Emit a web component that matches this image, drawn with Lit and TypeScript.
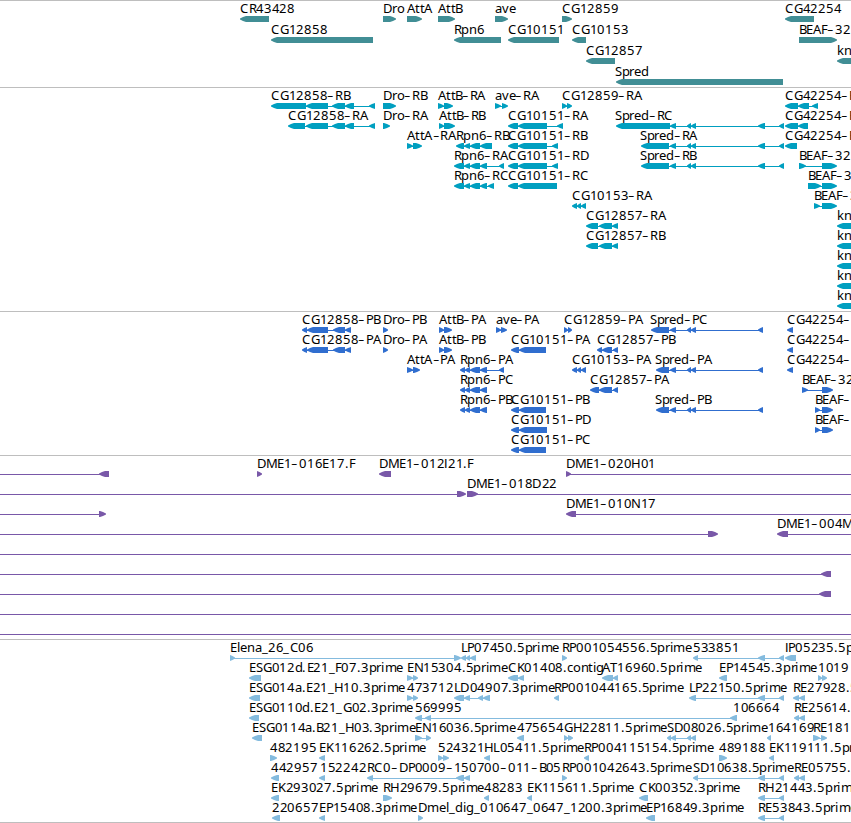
import { LitElement, html, svg, css } from 'lit';
import { customElement, property } from 'lit/decorators.js';

type Strand = '<' | '>';
type Span = [number, number];

// x of the label, label, strand, blocks joined by a thin line
type Feature = [number, string, Strand, Span[]];

interface Track {
  name: string;
  height: number;
  pitch: number;
  rows: Feature[][];
}

const VIEW_WIDTH = 851;
const BLOCK_TOP = 15;
const BLOCK_HEIGHT = 6;
const HEAD = 6;
const FONT_SIZE = 12;

// glyph advances in thousandths of an em
const DIGIT_ADVANCE = 643;
const ADVANCES: Record<string, number> = {
  A: 690, B: 565, C: 720, D: 765, E: 565, F: 540, G: 755, H: 760, I: 291,
  K: 650, L: 540, M: 885, N: 770, O: 790, P: 560, R: 620, S: 565, T: 600,
  a: 575, c: 516, d: 640, e: 580, f: 356, g: 635, i: 295, k: 580, l: 289,
  m: 950, n: 628, o: 613, p: 640, r: 406, t: 373, v: 550,
  '.': 340, _: 520, '-': 665,
};

const SPRED_TAIL: Span[] = [[670, 676], [687, 691], [691, 696], [758, 765], [779, 784]];
const SPRED_CDS_TAIL: Span[] = [[670, 676], [687, 691], [691, 696], [758, 763]];
const OFF_LEFT = -40;
const OFF_RIGHT = 900;

const TRACKS: Track[] = [
  {
    name: 'gene',
    height: 87,
    pitch: 21,
    rows: [
      [
        [240, 'CR43428', '<', [[240, 269]]],
        [383, 'Dro', '>', [[383, 396]]],
        [407, 'AttA', '>', [[407, 422]]],
        [438, 'AttB', '>', [[438, 455]]],
        [495, 'ave', '>', [[495, 508]]],
        [562, 'CG12859', '>', [[562, 572]]],
        [785, 'CG42254', '<', [[785, 814]]],
      ],
      [
        [271, 'CG12858', '<', [[271, 373]]],
        [454, 'Rpn6', '<', [[454, 501]]],
        [508, 'CG10151', '<', [[508, 559]]],
        [572, 'CG10153', '<', [[572, 586]]],
        [799, 'BEAF-32', '>', [[799, 837]]],
      ],
      [
        [586, 'CG12857', '<', [[586, 615]]],
        [837, 'kn', '<', [[837, 870]]],
      ],
      [[615, 'Spred', '<', [[616, 783]]]],
    ],
  },
  {
    name: 'transcript',
    height: 224,
    pitch: 20,
    rows: [
      [
        [271, 'CG12858-RB', '<', [[271, 306], [306, 328], [332, 345], [345, 354], [369, 375]]],
        [383, 'Dro-RB', '>', [[383, 396]]],
        [438, 'AttB-RA', '>', [[438, 444], [444, 453]]],
        [495, 'ave-RA', '>', [[495, 501], [502, 508]]],
        [562, 'CG12859-RA', '>', [[562, 567], [567, 572]]],
        [785, 'CG42254-RB', '<', [[785, 798], [798, 809], [812, 818]]],
      ],
      [
        [288, 'CG12858-RA', '<', [[288, 305], [306, 328], [332, 345], [345, 354], [369, 375]]],
        [383, 'Dro-RA', '>', [[383, 390]]],
        [439, 'AttB-RB', '>', [[439, 444], [444, 455]]],
        [508, 'CG10151-RA', '<', [[508, 518], [518, 547], [557, 563]]],
        [615, 'Spred-RC', '<', [[616, 670], ...SPRED_TAIL]],
        [785, 'CG42254-RC', '<', [[785, 798], [798, 808]]],
      ],
      [
        [407, 'AttA-RA', '>', [[407, 413], [413, 422]]],
        [456, 'Rpn6-RB', '<', [[456, 464], [464, 470], [470, 480], [480, 492]]],
        [508, 'CG10151-RB', '<', [[508, 518], [518, 547], [552, 558]]],
        [640, 'Spred-RA', '<', [[641, 669], ...SPRED_TAIL]],
        [785, 'CG42254-RA', '<', [[785, 797]]],
      ],
      [
        [454, 'Rpn6-RA', '<', [[454, 464], [464, 470], [470, 480], [480, 487], [499, 504]]],
        [508, 'CG10151-RD', '<', [[508, 518], [518, 547], [552, 558]]],
        [640, 'Spred-RB', '<', [[641, 669], ...SPRED_TAIL]],
        [799, 'BEAF-32-RA', '>', [[799, 806], [822, 837]]],
      ],
      [
        [454, 'Rpn6-RC', '<', [[454, 464], [464, 470], [470, 480], [480, 487], [488, 494]]],
        [508, 'CG10151-RC', '<', [[508, 518], [518, 557]]],
        [808, 'BEAF-32-RB', '>', [[808, 821], [822, 837]]],
      ],
      [
        [572, 'CG10153-RA', '<', [[572, 577], [577, 581], [581, 586]]],
        [814, 'BEAF-32-RC', '>', [[814, 820], [822, 837]]],
      ],
      [
        [586, 'CG12857-RA', '<', [[586, 598], [599, 612], [612, 618]]],
        [837, 'kn-RA', '<', [[837, 870]]],
      ],
      [
        [586, 'CG12857-RB', '<', [[586, 598], [599, 612], [612, 618]]],
        [837, 'kn-RB', '<', [[837, 870]]],
      ],
      [[837, 'kn-RC', '<', [[837, 870]]]],
      [[837, 'kn-RD', '<', [[837, 870]]]],
      [[837, 'kn-RE', '<', [[837, 870]]]],
    ],
  },
  {
    name: 'cds',
    height: 144,
    pitch: 20,
    rows: [
      [
        [302, 'CG12858-PB', '<', [[302, 307], [307, 328], [333, 345], [345, 351]]],
        [383, 'Dro-PB', '>', [[383, 388]]],
        [439, 'AttB-PA', '>', [[439, 444], [444, 452]]],
        [496, 'ave-PA', '>', [[496, 501], [501, 507]]],
        [564, 'CG12859-PA', '>', [[564, 568], [568, 572]]],
        [650, 'Spred-PC', '<', [[651, 669], ...SPRED_CDS_TAIL]],
        [787, 'CG42254-PB', '<', [[787, 793]]],
      ],
      [
        [302, 'CG12858-PA', '<', [[302, 307], [307, 328], [333, 345], [345, 351]]],
        [383, 'Dro-PA', '>', [[383, 388]]],
        [439, 'AttB-PB', '>', [[439, 444], [444, 452]]],
        [511, 'CG10151-PA', '<', [[511, 519], [519, 546]]],
        [597, 'CG12857-PB', '<', [[597, 602], [602, 612], [613, 618]]],
        [787, 'CG42254-PC', '<', [[787, 793]]],
      ],
      [
        [407, 'AttA-PA', '>', [[407, 413], [413, 420]]],
        [460, 'Rpn6-PA', '<', [[460, 465], [465, 470], [470, 480], [480, 487], [499, 504]]],
        [572, 'CG10153-PA', '<', [[572, 577], [577, 581], [581, 586]]],
        [655, 'Spred-PA', '<', [[656, 669], ...SPRED_CDS_TAIL]],
        [787, 'CG42254-PA', '<', [[787, 793]]],
      ],
      [
        [460, 'Rpn6-PC', '<', [[460, 465], [465, 470], [470, 480], [480, 487]]],
        [590, 'CG12857-PA', '<', [[590, 599], [599, 612], [613, 618]]],
        [802, 'BEAF-32-PA', '>', [[802, 808], [822, 833]]],
      ],
      [
        [460, 'Rpn6-PB', '<', [[460, 465], [465, 470], [470, 480], [480, 487]]],
        [511, 'CG10151-PB', '<', [[511, 519], [519, 546]]],
        [655, 'Spred-PB', '<', [[656, 669], ...SPRED_CDS_TAIL]],
        [815, 'BEAF-32-PB', '>', [[815, 820], [822, 833]]],
      ],
      [
        [511, 'CG10151-PD', '<', [[511, 519], [519, 547]]],
        [815, 'BEAF-32-PC', '>', [[815, 820], [822, 833]]],
      ],
      [[511, 'CG10151-PC', '<', [[511, 519], [519, 546]]]],
    ],
  },
  {
    name: 'bac',
    height: 184,
    pitch: 20,
    rows: [
      [
        [0, '', '<', [[OFF_LEFT, OFF_LEFT + 8], [99, 109]]],
        [257, 'DME1-016E17.F', '>', [[257, 262]]],
        [379, 'DME1-012I21.F', '<', [[379, 391]]],
        [566, 'DME1-020H01', '>', [[566, 571], [OFF_RIGHT, OFF_RIGHT + 8]]],
      ],
      [
        [0, '', '>', [[OFF_LEFT, OFF_LEFT + 8], [457, 466]]],
        [467, 'DME1-018D22', '>', [[467, 478], [OFF_RIGHT, OFF_RIGHT + 8]]],
      ],
      [
        [0, '', '>', [[OFF_LEFT, OFF_LEFT + 8], [99, 106]]],
        [566, 'DME1-010N17', '<', [[566, 576], [OFF_RIGHT, OFF_RIGHT + 8]]],
      ],
      [
        [0, '', '>', [[OFF_LEFT, OFF_LEFT + 8], [708, 718]]],
        [777, 'DME1-004M', '<', [[777, 788], [OFF_RIGHT, OFF_RIGHT + 8]]],
      ],
      [[0, '', '<', [[OFF_LEFT, OFF_LEFT + 8], [OFF_RIGHT, OFF_RIGHT + 8]]]],
      [[0, '', '<', [[OFF_LEFT, OFF_LEFT + 8], [821, 831]]]],
      [[0, '', '<', [[OFF_LEFT, OFF_LEFT + 8], [819, 831]]]],
      [[0, '', '<', [[OFF_LEFT, OFF_LEFT + 8], [OFF_RIGHT, OFF_RIGHT + 8]]]],
      [[0, '', '<', [[OFF_LEFT, OFF_LEFT + 8], [OFF_RIGHT, OFF_RIGHT + 8]]]],
    ],
  },
  {
    name: 'est',
    height: 183,
    pitch: 20,
    rows: [
      [
        [230, 'Elena_26_C06', '>', [[230, 235], [454, 461]]],
        [461, 'LP07450.5prime', '<', [[461, 466], [466, 470], [470, 476]]],
        [562, 'RP001054556.5prime', '>', [[562, 567]]],
        [693, '533851', '<', [[693, 698], [758, 765], [779, 784]]],
        [785, 'IP05235.5prime', '<', [[785, 796]]],
      ],
      [
        [249, 'ESG012d.E21_F07.3prime', '<', [[249, 261]]],
        [407, 'EN15304.5prime', '>', [[407, 413], [413, 418]]],
        [508, 'CK01408.contig', '<', [[508, 518], [518, 524]]],
        [602, 'AT16960.5prime', '<', [[602, 613], [613, 618]]],
        [719, 'EP14545.3prime', '<', [[719, 727]]],
        [818, '1019', '>', [[818, 822], [822, 827]]],
      ],
      [
        [249, 'ESG014a.E21_H10.3prime', '<', [[249, 260]]],
        [407, '473712', '>', [[407, 413], [413, 418]]],
        [454, 'LD04907.3prime', '<', [[454, 464], [464, 470], [478, 483], [483, 490]]],
        [554, 'RP001044165.5prime', '<', [[554, 559]]],
        [689, 'LP22150.5prime', '<', [[689, 696], [758, 765], [779, 784]]],
        [793, 'RE27928.5prime', '<', [[793, 799], [799, 805]]],
      ],
      [
        [249, 'ESG0110d.E21_G02.3prime', '<', [[249, 259]]],
        [415, '569995', '<', [[415, 422], [425, 431], [730, 737]]],
        [733, '106664', '<', [[732, 737]]],
        [794, 'RE25614.5prime', '<', [[794, 799], [799, 805]]],
      ],
      [
        [252, 'ESG0114a.B21_H03.3prime', '<', [[252, 262]]],
        [415, 'EN16036.5prime', '>', [[415, 422], [426, 431]]],
        [517, '475654', '<', [[517, 524]]],
        [564, 'GH22811.5prime', '>', [[564, 568], [568, 573]]],
        [667, 'SD08026.5prime', '<', [[667, 671], [671, 676], [687, 691], [691, 696]]],
        [768, '164169', '<', [[767, 771]]],
        [813, 'RE181', '>', [[813, 820], [821, 827]]],
      ],
      [
        [270, '482195', '>', [[270, 277]]],
        [319, 'EK116262.5prime', '<', [[319, 325]]],
        [438, '524321', '>', [[438, 443], [443, 449]]],
        [484, 'HL05411.5prime', '<', [[484, 490]]],
        [584, 'RP004115154.5prime', '<', [[584, 589]]],
        [719, '489188', '>', [[719, 727]]],
        [769, 'EK119111.5prime', '<', [[769, 774]]],
      ],
      [
        [271, '442957', '<', [[271, 279]]],
        [320, '152242', '<', [[319, 325]]],
        [367, 'RC0-DP0009-150700-011-B05', '<', [[367, 373], [456, 464], [464, 470]]],
        [562, 'RP001042643.5prime', '>', [[562, 567]]],
        [693, 'SD10638.5prime', '<', [[693, 698], [758, 765], [779, 784]]],
        [794, 'RE05755.5prime', '<', [[794, 799], [799, 805]]],
      ],
      [
        [271, 'EK293027.5prime', '<', [[271, 279]]],
        [383, 'RH29679.5prime', '>', [[383, 392]]],
        [484, '48283', '<', [[484, 489]]],
        [527, 'EK115611.5prime', '<', [[527, 532]]],
        [639, 'CK00352.3prime', '<', [[639, 648]]],
        [758, 'RH21443.5prime', '<', [[758, 765], [779, 784]]],
      ],
      [
        [272, '220657', '<', [[272, 280]]],
        [319, 'EP15408.3prime', '<', [[319, 325]]],
        [418, 'Dmel_dig_010647_0647_1200.3prime', '>', [[418, 423]]],
        [646, 'EP16849.3prime', '<', [[646, 655]]],
        [758, 'RE53843.5prime', '<', [[758, 765], [779, 784]]],
      ],
    ],
  },
];

@customElement('feature-track')
export class FeatureTrack extends LitElement {
  @property({ attribute: false })
  track!: Track;

  static styles = css`
    :host {
      display: block;
      box-sizing: border-box;
      border-top: 1px solid #bebebe;
      overflow: hidden;
    }

    svg {
      display: block;
    }

    .label {
      font-family: 'Noto Sans', 'DejaVu Sans', sans-serif;
      font-size: 13px;
      fill: #000;
      white-space: pre;
    }

    .dash {
      font-family: 'Open Sans', 'Noto Sans', sans-serif;
      font-size: 20px;
      font-weight: 300;
    }

    .stem {
      font-family: 'DejaVu Sans', sans-serif;
      font-size: 12px;
    }

    .gene {
      fill: #418e95;
    }

    .transcript {
      fill: #009fc0;
    }

    .cds {
      fill: #306ecf;
    }

    .bac {
      fill: #7958a8;
    }

    .est {
      fill: #84bbde;
    }
  `;

  // every glyph sits on a whole pixel
  private glyphPositions(x: number, label: string): string {
    let pen = x;
    return [...label]
      .map((ch) => {
        const at = Math.round(pen);
        pen += ((ADVANCES[ch] ?? DIGIT_ADVANCE) * FONT_SIZE) / 1000;
        return at;
      })
      .join(' ');
  }

  // dashes are drawn larger than the letters, so they need their own baseline;
  private renderLabel(x: number, label: string, y: number) {
    const ys = [...label].map((ch) => (ch === '-' ? y + 2 : y)).join(' ');
    const parts = label.split(/([-I])/).map((part) => {
      if (part === '-') return svg`<tspan class="dash">-</tspan>`;
      if (part === 'I') return svg`<tspan class="stem">I</tspan>`;
      return part;
    });

    return svg`<text class="label" x=${this.glyphPositions(x, label)} y=${ys}>${parts}</text>`;
  }

  // heads bulge a little, they are not plain triangles
  private blockPath([start, end]: Span, top: number, strand: Strand): string {
    const head = Math.min(HEAD, end - start);
    const bottom = top + BLOCK_HEIGHT;
    const tip = strand === '<' ? start : end;
    const tail = strand === '<' ? end : start;
    const dir = strand === '<' ? 1 : -1;
    const neck = tip + dir * head;
    const bulge = tip + dir * head * 0.5;
    return (
      `M${tip} ${top + 2.5}L${bulge} ${top + 1}L${neck} ${top}H${tail}V${bottom}` +
      `H${neck}L${bulge} ${bottom - 1}L${tip} ${bottom - 2.5}Z`
    );
  }

  private renderFeature([x, label, strand, blocks]: Feature, y: number) {
    const top = y + BLOCK_TOP;
    const first = blocks[0][0];
    const last = blocks[blocks.length - 1][1];

    return svg`
      ${blocks.length > 1
        ? svg`<rect x=${first + 1} y=${top + 3} width=${last - first - 2} height="1"></rect>`
        : ''}
      <path d=${blocks.map((b) => this.blockPath(b, top, strand)).join('')}></path>
      ${label ? this.renderLabel(x, label, y + 12) : ''}
    `;
  }

  render() {
    const { name, height, pitch, rows } = this.track;

    return html`
      <svg class=${name} width=${VIEW_WIDTH} height=${height - 1}>
        ${rows.map((row, i) => row.map((f) => this.renderFeature(f, i * pitch)))}
      </svg>
    `;
  }
}

@customElement('app-root')
export class AppRoot extends LitElement {
  static styles = css`
    :host {
      display: flex;
      flex-direction: column;
      box-sizing: border-box;
      width: 851px;
      height: 823px;
      overflow: hidden;
      background: #fff;
      border-bottom: 1px solid #bebebe;
    }
  `;

  render() {
    return html`${TRACKS.map((track) => html`<feature-track .track=${track}></feature-track>`)}`;
  }
}

declare global {
  interface HTMLElementTagNameMap {
    'app-root': AppRoot;
    'feature-track': FeatureTrack;
  }
}
